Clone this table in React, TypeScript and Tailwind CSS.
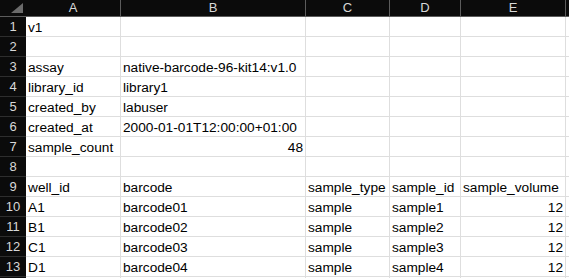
import React from "react";

const cols = [
  { key: "A", w: "w-[95px]" },
  { key: "B", w: "w-[185px]" },
  { key: "C", w: "w-[84px]" },
  { key: "D", w: "w-[71px]" },
  { key: "E", w: "w-[105px]" },
];

type Cell = string | { v: string; right: true };

const rows: Cell[][] = [
  ["v1", "", "", "", ""],
  ["", "", "", "", ""],
  ["assay", "native-barcode-96-kit14:v1.0", "", "", ""],
  ["library_id", "library1", "", "", ""],
  ["created_by", "labuser", "", "", ""],
  ["created_at", "2000-01-01T12:00:00+01:00", "", "", ""],
  ["sample_count", { v: "48", right: true }, "", "", ""],
  ["", "", "", "", ""],
  ["well_id", "barcode", "sample_type", "sample_id", "sample_volume"],
  ["A1", "barcode01", "sample", "sample1", { v: "12", right: true }],
  ["B1", "barcode02", "sample", "sample2", { v: "12", right: true }],
  ["C1", "barcode03", "sample", "sample3", { v: "12", right: true }],
  ["D1", "barcode04", "sample", "sample4", { v: "12", right: true }],
  ["", "", "", "", ""],
];

export default function App() {
  return (
    <div
      className="w-[569px] h-[278px] overflow-hidden bg-white text-black"
      style={{ fontFamily: '"Liberation Sans", Arial, sans-serif' }}
    >
      {/* header row */}
      <div className="flex h-[17px] bg-[#0b0b0b] border-b border-[#5c5c5c]">
        <div className="w-[26px] shrink-0 relative border-r border-[#0b0b0b]">
          <svg width="26" height="16" className="absolute left-0 top-0">
            <polygon points="23,3 23,13 11,13" fill="#6b6b6b" />
          </svg>
        </div>
        {cols.map((c) => (
          <div
            key={c.key}
            className={`${c.w} shrink-0 border-r border-[#5c5c5c] flex items-center justify-center text-[13px] leading-[16px] text-[#d8d8d8]`}
          >
            {c.key}
          </div>
        ))}
        <div className="flex-1" />
      </div>
      {rows.map((r, i) => (
        <div key={i} className="flex h-[20px]">
          <div className="w-[26px] shrink-0 bg-[#0b0b0b] border-b border-[#2e2e2e] flex items-center justify-center text-[13px] leading-[16px] text-[#d8d8d8]">
            {i < 13 ? i + 1 : ""}
          </div>
          {r.map((cell, j) => {
            const right = typeof cell !== "string";
            const text = typeof cell === "string" ? cell : cell.v;
            return (
              <div
                key={j}
                className={`${cols[j].w} shrink-0 border-r border-b border-[#dedede] flex items-end px-[2px] text-[13.7px] leading-[16px] whitespace-nowrap overflow-visible ${
                  right ? "justify-end" : "justify-start"
                }`}
              >
                {text}
              </div>
            );
          })}
          <div className="flex-1 border-b border-[#dedede]" />
        </div>
      ))}
    </div>
  );
}
